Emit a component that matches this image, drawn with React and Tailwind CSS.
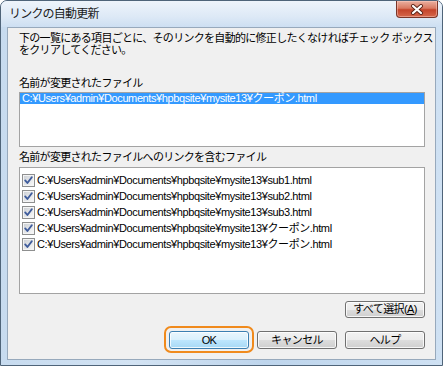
import React from 'react';

const FONT = "font-['Liberation_Sans','Noto_Sans_CJK_JP',sans-serif]";
const BASE = 'C:¥Users¥admin¥Documents¥hpbqsite¥mysite13¥';
const LINKED = ['sub1.html', 'sub2.html', 'sub3.html', 'クーポン.html', 'クーポン.html'];

function CheckBox() {
  return (
    <svg width="13" height="13" viewBox="0 0 13 13" className="shrink-0">
      <defs>
        <linearGradient id="cbg" x1="0" y1="0" x2="1" y2="1">
          <stop offset="0" stopColor="#cdd1d6" />
          <stop offset="1" stopColor="#f7f7f7" />
        </linearGradient>
      </defs>
      <rect x="0.5" y="0.5" width="12" height="12" fill="#f4f4f4" stroke="#8e8f8f" />
      <rect x="2" y="2" width="9" height="9" fill="url(#cbg)" />
      <path d="M3.2 6.4 L5.4 9 L9.8 3.2" fill="none" stroke="#3f5c9c" strokeWidth="1.9" strokeLinecap="round" strokeLinejoin="round" />
    </svg>
  );
}

function CloseButton() {
  return (
    <div className="w-[42px] h-[17px] rounded-b-[4px] border border-t-0 border-[#7a3528] bg-[linear-gradient(#eab0a0_0%,#d97a62_45%,#c4442a_55%,#d5674b_100%)] flex items-center justify-center shadow-[inset_0_0_0_1px_rgba(255,210,200,0.45)]">
      <svg width="14" height="11" viewBox="0 0 14 11">
        <path d="M3 2 L11 9 M11 2 L3 9" stroke="#5b2418" strokeWidth="4" strokeLinecap="round" />
        <path d="M3 2 L11 9 M11 2 L3 9" stroke="#ffffff" strokeWidth="2.2" strokeLinecap="round" />
      </svg>
    </div>
  );
}

function WinButton({ children, isDefault = false, className = '' }) {
  const face = isDefault
    ? 'border-[#3c7fb1] bg-[linear-gradient(#eaf6fd_0%,#d9f0fc_50%,#bee6fd_50%,#a7d9f5_100%)]'
    : 'border-[#707070] bg-[linear-gradient(#f2f2f2_0%,#ebebeb_50%,#dddddd_50%,#cfcfcf_100%)]';
  return (
    <button
      className={`relative w-[80px] border rounded-[3px] ${face} shadow-[inset_0_0_0_1px_rgba(255,255,255,0.8)] text-[11px] leading-none text-black tracking-[-0.6px] flex items-center justify-center ${className}`}
    >
      {children}
      {isDefault && (
        <span className="absolute -inset-x-[6px] -top-[6px] -bottom-[5px] rounded-[7px] border-2 border-[#f08a1c] pointer-events-none" />
      )}
    </button>
  );
}

export default function App() {
  return (
    <div className={`w-[443px] h-[366px] overflow-hidden bg-white ${FONT}`}>
      <div className="w-[443px] h-[366px] flex flex-col border border-[#4f6479] rounded-t-[7px] bg-[linear-gradient(90deg,#c7dbef_0%,#d3e3f3_30%,#bed5ec_60%,#cfe1f3_100%)]">
        <div className="h-[26px] flex items-start justify-between pl-[8px] pr-[4px] bg-[linear-gradient(#eef4fb_0%,#dde9f6_60%,#cddff2_100%)] rounded-t-[6px]">
          <span className="mt-[6px] text-[12px] leading-[14px] tracking-[-0.8px] text-[#1b1b1b]">リンクの自動更新</span>
          <CloseButton />
        </div>

        <div className="flex-1 mx-[6px] mb-[5px] border border-[#97a9bc] bg-[#f0f0f0] flex flex-col pl-[11px] pr-[10px]">
          <p className="mt-[4px] text-[11px] leading-[12px] tracking-[-0.7px] text-black whitespace-nowrap">
            下の一覧にある項目ごとに、そのリンクを自動的に修正したくなければチェック&nbsp;ボックス
            <br />
            をクリアしてください。
          </p>

          <div className="mt-[21px] h-[12px] text-[11px] leading-[12px] tracking-[-0.7px] text-black">
            名前が変更されたファイル
          </div>
          <div className="mt-[3px] w-[406px] h-[55px] border border-[#a3a3a3] bg-white">
            <div className="h-[11px] bg-[#3399ff] text-white text-[11px] leading-[11px] tracking-[-0.4px] pl-[2px] whitespace-nowrap">
              {BASE}クーポン.html
            </div>
          </div>

          <div className="mt-[4px] h-[12px] text-[11px] leading-[12px] tracking-[-0.7px] text-black">
            名前が変更されたファイルへのリンクを含むファイル
          </div>
          <div className="mt-[4px] w-[406px] h-[127px] border border-[#a3a3a3] bg-white pt-[4px]">
            {LINKED.map((f, i) => (
              <div key={i} className="h-[16px] flex items-center pl-[2px] gap-[2px]">
                <CheckBox />
                <span className="text-[11px] leading-[12px] tracking-[-0.4px] text-black whitespace-nowrap">
                  {BASE}{f}
                </span>
              </div>
            ))}
          </div>

          <div className="mt-[7px] w-[406px] flex justify-end">
            <WinButton className="h-[17px]">
              すべて選択(<span className="underline">A</span>)
            </WinButton>
          </div>

          <div className="mt-[13px] w-[406px] flex justify-end gap-[8px]">
            <WinButton isDefault className="h-[18px]">OK</WinButton>
            <WinButton className="h-[18px]">キャンセル</WinButton>
            <WinButton className="h-[18px]">ヘルプ</WinButton>
          </div>
        </div>
      </div>
    </div>
  );
}
